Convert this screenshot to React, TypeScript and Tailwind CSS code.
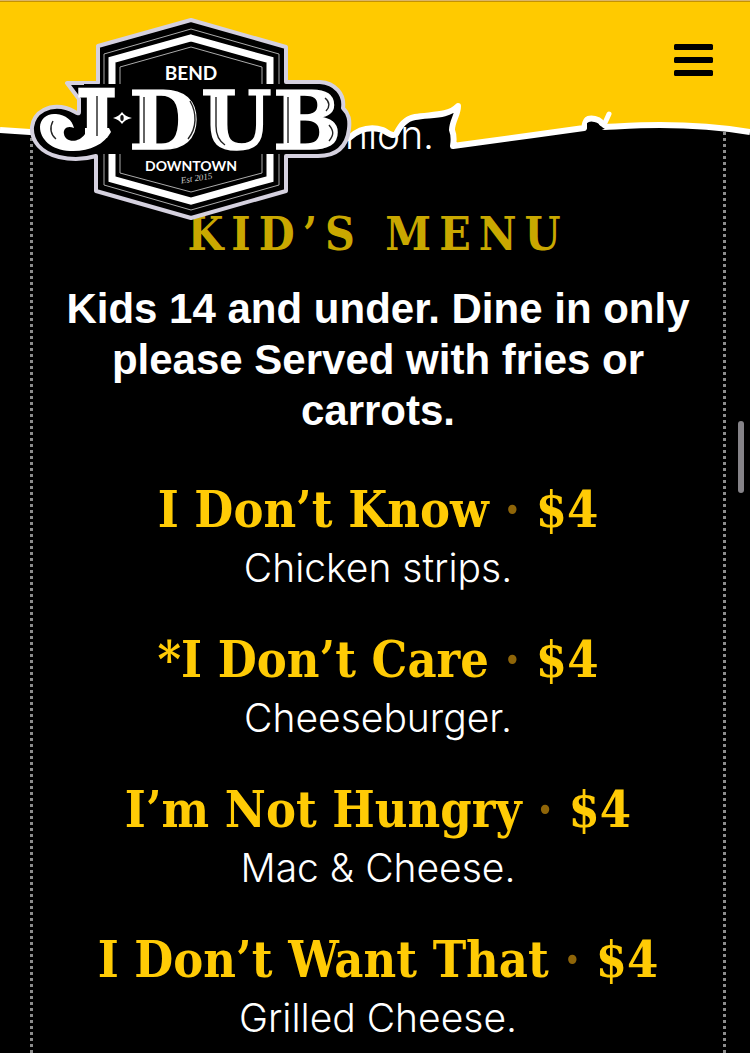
import React from 'react';

const items = [
  { name: 'I Don’t Know', price: '$4', description: 'Chicken strips.' },
  { name: '*I Don’t Care', price: '$4', description: 'Cheeseburger.' },
  { name: 'I’m Not Hungry', price: '$4', description: 'Mac & Cheese.' },
  { name: 'I Don’t Want That', price: '$4', description: 'Grilled Cheese.' },
];

function Logo() {
  return (
    <svg viewBox="28 16 326 206" className="block h-[206px] w-[326px]" role="img" aria-label="J-Dub Bend Downtown">
      <defs>
        <clipPath id="stem">
          <path d="M78 84 H118 V138 H78 Z" />
        </clipPath>
      </defs>
      <path
        d="M191 20 L286 47 V82 H320 C335 83 345 94 343 108 C349 114 350 120 349 129 C347 146 337 156 318 156 H286 V191 L191 218 L96 191 V156 C86 159 72 160 59 157 C41 153 31 141 32 127 C34 111 50 104 66 108 C74 110 79 116 79 112 V99 L67 83 H98 V46 Z"
        fill="#000"
        stroke="#d5d1df"
        strokeWidth="4"
        strokeLinejoin="round"
      />
      <g fill="none">
        <path d="M191 29 L279 54 V185 L191 210 L104 185 V54 Z" stroke="#aaa" strokeWidth="1" />
        <path d="M191 38 L270 60 V179 L191 201 L112 179 V60 Z" stroke="#fff" strokeWidth="7" />
        <path d="M191 47 L262 67 V173 L191 192 L120 173 V67 Z" stroke="#aaa" strokeWidth="1" />
      </g>
      <path d="M84 84 H300 V154 H84 Z" fill="#000" />
      <g fill="#fff" fontFamily="DejaVu Serif, serif" fontWeight="700" fontSize="81" stroke="#fff" strokeWidth="1.5">
        <text x="77" y="149" clipPath="url(#stem)" strokeWidth="5">
          J
        </text>
        <text x="129" y="149">D</text>
        <text x="201" y="149">U</text>
        <text x="273" y="149">B</text>
      </g>
      <path
        d="M111 132 C104 145 88 152 70 151 C51 150 40 139 40 127 C40 119 47 113 56 114 C66 115 72 120 74 128 C67 125 63 129 64 134 C65 142 78 144 85 134 V128 H109 Z"
        fill="#fff"
      />
      <g stroke="#222" strokeWidth="1.4" fill="none">
        <path d="M97 96 V136" />
        <path d="M144 97 V143" />
        <path d="M216 97 V126 C216 136 219 141 225 145" />
        <path d="M288 97 V143" />
        <path d="M190 101 C197 113 197 128 188 139" />
        <path d="M325 98 C330 102 330 107 326 111" />
        <path d="M329 125 C334 131 334 135 329 141" />
        <path d="M53 121 C49 128 51 135 56 139" />
      </g>
      <path d="M113 118 C117 117 120 115 122 112 C124 115 127 117 132 118 C127 119 124 121 122 124 C120 121 117 119 113 118 Z" fill="#fff" />
      <ellipse cx="122" cy="118" rx="1.7" ry="3" fill="#111" />
      <g fill="#fff" textAnchor="middle" fontFamily="Lato, sans-serif" fontWeight="700">
        <text x="191" y="80" fontSize="19">
          BEND
        </text>
        <text x="191" y="171" fontSize="14">
          DOWNTOWN
        </text>
      </g>
      <text
        x="197"
        y="181"
        fontSize="9"
        fontStyle="italic"
        fill="#ccc"
        textAnchor="middle"
        fontFamily="Liberation Serif, serif"
        transform="rotate(-9 197 181)"
      >
        Est 2015
      </text>
    </svg>
  );
}

function Header() {
  return (
    <header className="absolute inset-x-0 top-0 z-10">
      <svg viewBox="0 0 750 152" preserveAspectRatio="none" className="absolute inset-x-0 top-0 h-[152px] w-full" aria-hidden="true">
        <path
          d="M0 0 H750 V132 C720 127 690 125 660 125 C640 125 625 126 604 127 L601 122 C598 119 592 118 588 119 C585 120 585 125 584 128 C540 134 498 140 453 146 C454 140 454 135 452 130 C452 121 458 115 458 106 C447 117 430 114 415 117 C404 119 400 127 396 134 C393 137 388 133 383 130 C370 126 359 129 349 138 L30 132 L0 130 Z"
          fill="#ffca00"
        />
        <path
          d="M750 132 C720 127 690 125 660 125 C640 125 625 126 604 127 L601 122 C598 119 592 118 588 119 C585 120 585 125 584 128 C540 134 498 140 453 146 C454 140 454 135 452 130 C452 121 458 115 458 106 C447 117 430 114 415 117 C404 119 400 127 396 134 C393 137 388 133 383 130 C370 126 359 129 349 138 L30 132 L0 130"
          fill="none"
          stroke="#fff"
          strokeWidth="6"
          strokeLinejoin="round"
        />
        <path d="M604 125 L609 114" fill="none" stroke="#fff" strokeWidth="5" strokeLinecap="round" />
        <path d="M587 123 C593 120 598 124 605 129 L587 131 Z" fill="#000" />
        <path d="M0 0 H750 V1 H0 Z" fill="#d9b469" />
        <path d="M0 1 H750 V2 H0 Z" fill="#c59200" />
      </svg>
      <div className="relative flex items-start justify-between pt-4 pr-9 pl-7">
        <a href="#home">
          <Logo />
        </a>
        <button type="button" aria-label="Open menu" className="mt-7">
          <svg viewBox="0 0 40 32" className="block h-8 w-10" aria-hidden="true">
            <rect width="39" height="6" y="0" rx="1.5" />
            <rect width="39" height="6" y="13" rx="1.5" />
            <rect width="39" height="6" y="26" rx="1.5" />
          </svg>
        </button>
      </div>
    </header>
  );
}

export default function App() {
  return (
    <div className="relative flex min-h-screen flex-col overflow-hidden bg-black text-center text-white">
      <Header />
      <main className="mr-6 ml-[30px] flex-1 border-x-[3px] border-dotted border-[#8c8c8c] px-8 pt-[109px]">
        <p className="font-['Inter',sans-serif] text-[39px] leading-[52px] font-light">onion.</p>
        <h2 className="mt-10 font-['DejaVu_Serif_Condensed','DejaVu_Serif',serif] text-[46px] leading-[66px] font-bold tracking-[8px] text-[#c9a800]">
          KID’S MENU
        </h2>
        <p className="mt-4 font-['Liberation_Sans',sans-serif] text-[42px] leading-[51px] font-bold">
          Kids 14 and under. Dine in only please Served with fries or carrots.
        </p>
        <ul className="mt-[42px] flex flex-col gap-[34px]">
          {items.map((item) => (
            <li key={item.name}>
              <h3 className="font-['DejaVu_Serif_Condensed','DejaVu_Serif',serif] text-[50px] leading-[64px] font-bold whitespace-nowrap text-[#ffcb05]">
                {item.name} <span className="text-[#8f6508]">·</span> {item.price}
              </h3>
              <p className="font-['Inter',sans-serif] text-[39px] leading-[52px] font-light">{item.description}</p>
            </li>
          ))}
        </ul>
      </main>
      <div className="absolute top-[421px] right-[6px] h-[72px] w-[6px] rounded-full bg-[#858388]" />
    </div>
  );
}
